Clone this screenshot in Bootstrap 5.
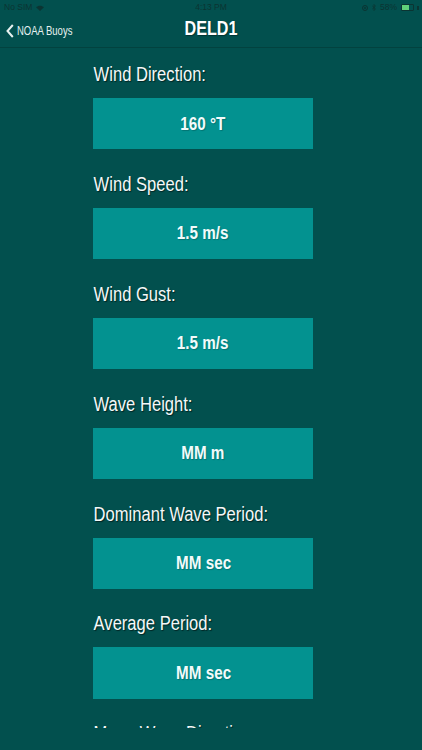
<!DOCTYPE html>
<html lang="en">
<head>
<meta charset="utf-8">
<title>DELD1</title>
<link href="https://cdn.jsdelivr.net/npm/bootstrap@5.3.0/dist/css/bootstrap.min.css" rel="stylesheet">
<style>
html,body{height:750px;overflow:hidden;background:#02504e;font-family:"Liberation Sans",Arial,sans-serif;color:#fff}
.topbar{height:48px;border-bottom:1px solid #02423f;position:relative}
.statusline{height:15px;padding:0 3px 0 4px;font-size:8.5px;color:#0b3432;line-height:15px}
.navline{height:32px;position:relative}
.backlink{color:#e6f1f0;text-decoration:none;padding-left:6px;height:32px;gap:3px}
.backtext{display:inline-block;font-size:13px;transform:scaleX(.73);transform-origin:left center;white-space:nowrap}
.pagetitle{position:absolute;left:0;right:0;top:-1px;text-align:center;font-size:21px;font-weight:700;line-height:28px;margin:0;transform:scaleX(.77);text-shadow:1px 1px 1px rgba(0,0,0,.35)}
.readings{width:219.700px;margin-left:93.300px;height:680px;overflow:hidden}
.fieldset-item{height:109.900px}
.fieldname{height:50px;font-size:19.500px;line-height:22px;padding-top:15px;padding-left:.7px;color:#f4f8f8;text-shadow:1px 1px 1px rgba(0,0,0,.55);margin:0;transform:scaleX(.85);transform-origin:left center;white-space:nowrap}
.fieldvalue{height:51.400px;background:#039290;font-size:17.500px;font-weight:700;color:#f2fbfb;text-shadow:1px 1px 1px rgba(0,0,0,.2)}
.fieldvalue span{display:inline-block;transform:scaleX(.87)}
.batt{width:13px;height:7px;background:linear-gradient(90deg,#5fd07a 60%,transparent 60%);border:1px solid #0b3432;border-radius:1px}
.plug{width:2px;height:4px;background:#0b3432;margin-left:-1px}
.timetext{left:50%;transform:translateX(-50%)}
</style>
</head>
<body>
<header class="topbar">
  <div class="statusline d-flex justify-content-between align-items-center position-relative">
    <span class="d-flex align-items-center gap-1">No SIM
      <svg width="8" height="6" viewBox="0 0 8 6"><path d="M4 6 0 2.2C2.2.1 5.800.1 8 2.200Z" fill="#0b3432"/></svg></span>
    <span class="position-absolute timetext">4:13 PM</span>
    <span class="d-flex align-items-center gap-1">
      <svg width="6" height="6" viewBox="0 0 6 6"><circle cx="3" cy="3" r="2.500" fill="none" stroke="#0b3432"/><circle cx="3" cy="3" r="1" fill="#0b3432"/></svg>
      <svg width="4" height="7" viewBox="0 0 4 7"><path d="M0 1.500 3.500 5 2 6.500V.5L3.500 2 0 5.500" fill="none" stroke="#0b3432" stroke-width=".7"/></svg>
      <span>58%</span><span class="batt d-inline-block"></span><span class="plug d-inline-block"></span>
    </span>
  </div>
  <div class="navline">
    <a class="backlink d-flex align-items-center" href="#">
      <svg width="8" height="14" viewBox="0 0 8 14"><path d="M6.800 1 1.500 7l5.300 6" fill="none" stroke="#e6f1f0" stroke-width="2"/></svg>
      <span class="backtext">NOAA Buoys</span></a>
    <h1 class="pagetitle">DELD1</h1>
  </div>
</header>
<main class="readings">
  <section class="fieldset-item"><p class="fieldname">Wind Direction:</p><div class="fieldvalue d-flex align-items-center justify-content-center"><span>160 °T</span></div></section>
  <section class="fieldset-item"><p class="fieldname">Wind Speed:</p><div class="fieldvalue d-flex align-items-center justify-content-center"><span>1.5 m/s</span></div></section>
  <section class="fieldset-item"><p class="fieldname">Wind Gust:</p><div class="fieldvalue d-flex align-items-center justify-content-center"><span>1.5 m/s</span></div></section>
  <section class="fieldset-item"><p class="fieldname">Wave Height:</p><div class="fieldvalue d-flex align-items-center justify-content-center"><span>MM m</span></div></section>
  <section class="fieldset-item"><p class="fieldname">Dominant Wave Period:</p><div class="fieldvalue d-flex align-items-center justify-content-center"><span>MM sec</span></div></section>
  <section class="fieldset-item"><p class="fieldname">Average Period:</p><div class="fieldvalue d-flex align-items-center justify-content-center"><span>MM sec</span></div></section>
  <section class="fieldset-item"><p class="fieldname">Mean Wave Direction:</p></section>
</main>
<script src="https://cdn.jsdelivr.net/npm/bootstrap@5.3.0/dist/js/bootstrap.bundle.min.js"></script>
</body>
</html>
